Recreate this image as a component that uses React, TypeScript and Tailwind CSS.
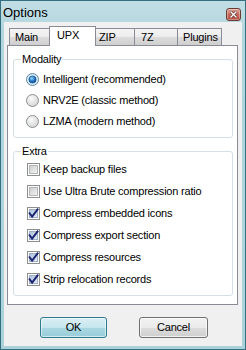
import React from "react";

function Radio({ checked }: { checked?: boolean }) {
  return (
    <svg width="13" height="13" viewBox="0 0 13 13" className="shrink-0">
      <defs>
        <radialGradient id="rOff" cx="0.4" cy="0.35" r="0.75">
          <stop offset="0" stopColor="#fbfbfb" />
          <stop offset="1" stopColor="#cfd0d2" />
        </radialGradient>
        <radialGradient id="rOn" cx="0.4" cy="0.35" r="0.7">
          <stop offset="0" stopColor="#9fdcfb" />
          <stop offset="0.5" stopColor="#2a7fcf" />
          <stop offset="1" stopColor="#0d3d7d" />
        </radialGradient>
      </defs>
      <circle cx="6.5" cy="6.5" r="6" fill={checked ? "#d7ecf8" : "url(#rOff)"} stroke={checked ? "#5f86a5" : "#8e8f8f"} />
      {checked ? <circle cx="6.5" cy="6.5" r="3.6" fill="url(#rOn)" stroke="#0f4a86" strokeWidth="0.6" /> : null}
    </svg>
  );
}

function Check({ checked }: { checked?: boolean }) {
  return (
    <svg width="13" height="13" viewBox="0 0 13 13" className="shrink-0">
      <defs>
        <linearGradient id="cOff" x1="0" y1="0" x2="1" y2="1">
          <stop offset="0" stopColor="#cbcdd0" />
          <stop offset="1" stopColor="#f3f3f3" />
        </linearGradient>
        <linearGradient id="cOn" x1="0" y1="0" x2="1" y2="1">
          <stop offset="0" stopColor="#a9bfd8" />
          <stop offset="1" stopColor="#e8f0f8" />
        </linearGradient>
      </defs>
      <rect x="0.5" y="0.5" width="12" height="12" fill="#ffffff" stroke="#8e8f8f" />
      <rect x="2.5" y="2.5" width="8" height="8" fill={checked ? "url(#cOn)" : "url(#cOff)"} stroke={checked ? "#9bb0c8" : "#b4b6b8"} />
      {checked ? (
        <path d="M2.6 6.3 L5.1 9.6 L10.6 2.4" fill="none" stroke="#1b2270" strokeWidth="1.9" strokeLinecap="square" />
      ) : null}
    </svg>
  );
}

function Tab({ label, className }: { label: string; className: string }) {
  return (
    <div
      className={
        "h-[17px] border-l border-t border-r border-[#898c95] bg-[linear-gradient(#f4f4f4,#ececec_50%,#dcdcdc_50%,#cfcfcf)] pl-[5px] pt-[2px] leading-[13px] " +
        className
      }
    >
      {label}
    </div>
  );
}

export default function App() {
  return (
    <div className="w-[246px] h-[350px] border border-[#32707f] bg-[linear-gradient(#c2dee5,#b3d6de_30px,#abd2db)] flex flex-col font-['Liberation_Sans',Arial,sans-serif] text-[11px] tracking-[-0.2px] text-black overflow-hidden">
      {/* title bar */}
      <div className="h-[21px] shrink-0 flex items-start justify-between pl-[2px] pr-[4px]">
        <span className="text-[13px] leading-[15px] pt-[4px] tracking-normal">Options</span>
        <div className="mt-[7px] w-[15px] h-[13px] rounded-[3px] border border-[#6b3a33] bg-[linear-gradient(#dca398,#c7685b_50%,#b5493b)] flex items-center justify-center shadow-[inset_0_0_0_1px_rgba(255,255,255,0.35)]">
          <svg width="7" height="7" viewBox="0 0 7 7">
            <path d="M1 1 L6 6 M6 1 L1 6" stroke="#5a2a24" strokeWidth="2.6" strokeLinecap="square" />
            <path d="M1 1 L6 6 M6 1 L1 6" stroke="#ffffff" strokeWidth="1.4" strokeLinecap="square" />
          </svg>
        </div>
      </div>

      {/* body */}
      <div className="mx-[3px] mb-[3px] flex-1 bg-[#f0f0f0] px-[3px] pt-[4px] flex flex-col">
        {/* tabs */}
        <div className="h-[19px] flex items-end pl-[2px]">
          <Tab label="Main" className="w-[43px]" />
          <div className="relative z-10 -ml-[3px] w-[47px] h-[20px] -mb-[1px] border-l border-t border-r border-[#898c95] bg-white pl-[7px] pt-[2px] leading-[13px]">
            UPX
          </div>
          <Tab label="ZIP" className="-ml-[3px] w-[42px]" />
          <Tab label="7Z" className="-ml-[1px] w-[44px] pl-[6px]" />
          <Tab label="Plugins" className="-ml-[1px] w-[45px]" />
        </div>

        {/* panel */}
        <div className="w-[231px] h-[260px] border border-[#898c95] bg-white pl-[5px]">
          {/* Modality */}
          <div className="relative mt-[13px] w-[220px] h-[79px] border border-[#d5dfe5] rounded-[3px] pt-[9px] pl-[12px] flex flex-col">
            <span className="absolute top-[-7px] left-[7px] px-[1px] bg-white leading-[13px]">Modality</span>
            {[
              ["Intelligent (recommended)", true],
              ["NRV2E (classic method)", false],
              ["LZMA (modern method)", false],
            ].map(([t, c]) => (
              <div key={t as string} className="h-[21px] flex items-center gap-[4px] leading-[13px]">
                <Radio checked={c as boolean} />
                <span>{t as string}</span>
              </div>
            ))}
          </div>

          {/* Extra */}
          <div className="relative mt-[13px] w-[220px] h-[145px] border border-[#d5dfe5] rounded-[3px] pt-[6px] pl-[13px] flex flex-col">
            <span className="absolute top-[-7px] left-[7px] px-[1px] bg-white leading-[13px]">Extra</span>
            {[
              ["Keep backup files", false],
              ["Use Ultra Brute compression ratio", false],
              ["Compress embedded icons", true],
              ["Compress export section", true],
              ["Compress resources", true],
              ["Strip relocation records", true],
            ].map(([t, c]) => (
              <div key={t as string} className="h-[22px] flex items-center gap-[3px] leading-[13px]">
                <Check checked={c as boolean} />
                <span>{t as string}</span>
              </div>
            ))}
          </div>
        </div>

        {/* buttons */}
        <div className="mt-[12px] flex pl-[33px] gap-[32px]">
          <button className="w-[67px] h-[21px] rounded-[3px] border border-[#2c7b8e] bg-[linear-gradient(#d9eff4,#c6e6ee_50%,#a9d7e2_50%,#98cdd9)] shadow-[inset_0_0_0_1px_rgba(255,255,255,0.55)] leading-[13px] text-[11px]">
            OK
          </button>
          <button className="w-[69px] h-[21px] rounded-[3px] border border-[#707070] bg-[linear-gradient(#f2f2f2,#ebebeb_50%,#dddddd_50%,#cfcfcf)] shadow-[inset_0_0_0_1px_rgba(255,255,255,0.7)] leading-[13px] text-[11px]">
            Cancel
          </button>
        </div>
      </div>
    </div>
  );
}
